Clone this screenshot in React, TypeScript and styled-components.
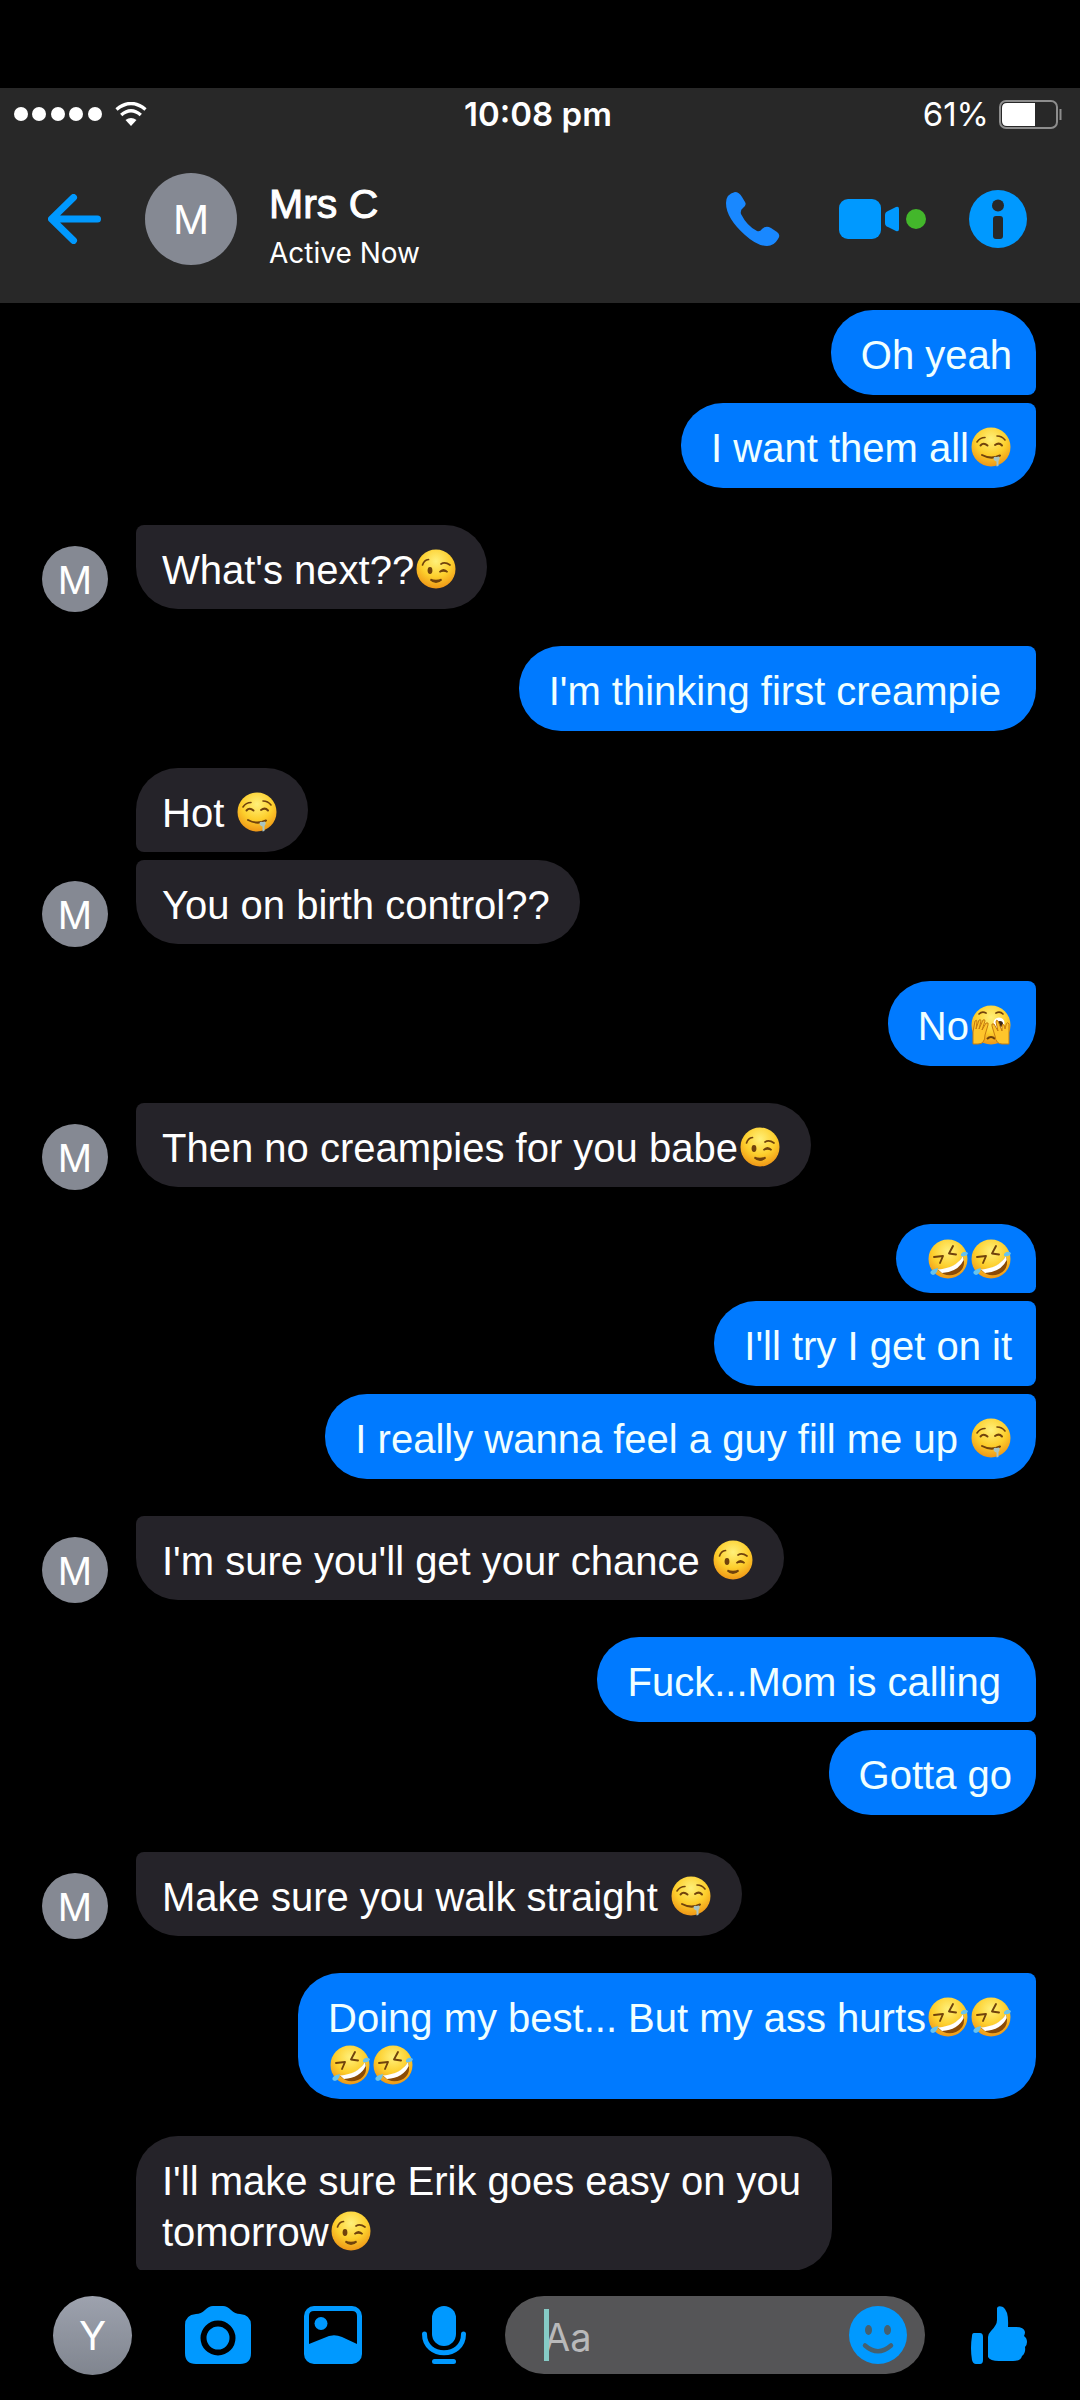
import React from 'react';
import styled, { createGlobalStyle, css } from 'styled-components';

const blue = '#0099ff';

const GlobalStyle = createGlobalStyle`
  * { box-sizing: border-box; }
  body { margin: 0; background: #000; }
  button { border: 0; padding: 0; background: none; cursor: pointer; }
  svg { display: block; flex: none; }
`;

const Page = styled.div`
  height: 100vh;
  display: flex;
  flex-direction: column;
  padding-top: 88px;
  background: #000;
  color: #fff;
  font-family: Inter, 'Liberation Sans', sans-serif;
`;

const Top = styled.header`
  flex: none;
  background: #282828;
`;

const StatusBar = styled.div`
  display: grid;
  grid-template-columns: 1fr auto 1fr;
  align-items: center;
  height: 52px;
  padding: 0 18px 0 14px;
  font-size: 33px;
  line-height: 40px;
`;

const Signal = styled.div`
  display: flex;
  align-items: center;
  gap: 13px;
`;

const Time = styled.time`
  font-weight: 600;
`;

const Power = styled.div`
  display: flex;
  align-items: center;
  justify-content: flex-end;
  gap: 10px;
`;

const ContactBar = styled.div`
  display: flex;
  align-items: center;
  height: 163px;
  padding: 0 53px 6px 48px;
`;

const Avatar = styled.div<{ $size: number; $font: number; $shaded?: boolean }>`
  flex: none;
  display: flex;
  align-items: center;
  justify-content: center;
  width: ${(p) => p.$size}px;
  height: ${(p) => p.$size}px;
  padding-top: 2px;
  border-radius: 50%;
  background: ${(p) => (p.$shaded ? 'linear-gradient(#9da2ae, #80858f)' : '#858993')};
  font-size: ${(p) => p.$font}px;
  line-height: 1;
`;

const Contact = styled.div`
  flex: 1;
  display: flex;
  align-items: center;
  gap: 32px;
  margin-left: 44px;
`;

const Name = styled.h1`
  margin: 12px 0 0;
  font-family: 'Liberation Sans', Arial, sans-serif;
  font-size: 41px;
  line-height: 50px;
  font-weight: 400;
  -webkit-text-stroke: 1px #fff;
`;

const Presence = styled.p`
  margin: 6px 0 0;
  font-size: 28px;
  line-height: 36px;
`;

const Actions = styled.div`
  display: flex;
  align-items: center;
  gap: 43px;
`;

const IconButton = styled.button`
  flex: none;
  display: flex;
  align-items: center;
  color: ${blue};
`;

const CallButton = styled(IconButton)`
  color: #1988ff;
  margin-right: 16px;
`;

const Video = styled.span`
  display: flex;
  align-items: center;
  gap: 7px;
`;

const OnlineDot = styled.span`
  width: 20px;
  height: 20px;
  border-radius: 50%;
  background: #43b72b;
`;

const Thread = styled.main`
  flex: 1;
  min-height: 0;
  overflow: hidden;
  display: flex;
  flex-direction: column;
  gap: 37px;
  padding: 7px 44px 0 42px;
`;

const Group = styled.section<{ $mine: boolean }>`
  flex: none;
  display: flex;
  align-items: flex-end;
  justify-content: ${(p) => (p.$mine ? 'flex-end' : 'flex-start')};
  gap: 28px;
`;

const AvatarSlot = styled.div`
  flex: none;
  width: 66px;
  margin-bottom: -3px;
`;

const Stack = styled.div<{ $mine: boolean }>`
  display: flex;
  flex-direction: column;
  align-items: ${(p) => (p.$mine ? 'flex-end' : 'flex-start')};
  gap: 8px;
`;

type Corner = 'first' | 'middle' | 'last';

const Bubble = styled.p<{ $mine: boolean; $corner: Corner }>`
  margin: 0;
  font-family: 'Liberation Sans', Arial, sans-serif;
  font-size: 40px;
  line-height: 51px;
  ${(p) => {
    const near = p.$corner === 'first' ? 42 : 8;
    const below = p.$corner === 'last' ? 42 : 8;
    return p.$mine
      ? css`
          padding: 20px 24px 14px 30px;
          background: #007aff;
          color: #f0ffff;
          border-radius: 42px ${near}px ${below}px 42px;
        `
      : css`
          max-width: 696px;
          padding: 20px 30px 13px 26px;
          background: #252329;
          border-radius: ${near}px 42px 42px ${below}px;
        `;
  }}
`;

const EmojiLine = styled.span<{ $alone: boolean }>`
  display: flex;
  height: ${(p) => (p.$alone ? 35 : 41)}px;
  align-items: center;
  ${(p) => p.$alone && 'margin: -3px 0 3px;'}
`;

const EmojiBox = styled.span`
  display: inline-block;
  width: 43px;
  height: 40px;
  padding: 0 1px 0 2px;
  vertical-align: -5px;
`;

const Composer = styled.form`
  flex: none;
  display: flex;
  align-items: center;
  height: 130px;
  padding: 0 53px;
`;

const Tools = styled.div`
  display: flex;
  align-items: center;
  margin: 0 39px 0 53px;
  gap: 53px;
`;

const MicButton = styled(IconButton)`
  margin-left: 7px;
`;

const Field = styled.label`
  position: relative;
  flex: 1;
  min-width: 0;
  display: flex;
  align-items: center;
  height: 78px;
  margin-right: 46px;
  padding: 0 18px 0 39px;
  border-radius: 39px;
  background: #555557;
`;

const Input = styled.input`
  flex: 1;
  min-width: 0;
  height: 52px;
  padding: 4px 0 0;
  border: 0;
  outline: 0;
  background: none;
  color: #fff;
  font: 38px/48px Inter, 'Liberation Sans', sans-serif;
  &::placeholder { color: #b9b9ba; opacity: 1; }
`;

const Caret = styled.span`
  position: absolute;
  left: 39px;
  top: 13px;
  width: 5px;
  height: 52px;
  background: #86cbc6;
`;

const ink = '#70420c';

const faces: Record<string, { label: string; art: React.ReactNode }> = {
  '🤤': {
    label: 'drooling face',
    art: (
      <>
        <g fill="none" stroke={ink} strokeWidth="1.6" strokeLinecap="round">
          <path d="M6 15q3-4.500 8-4.500" />
          <path d="M26 9q5 0 8 4" />
          <path d="M9.500 18.500q3-3.500 7 0" strokeWidth="2" />
          <path d="M24 18q4-3 7 .5" strokeWidth="2" />
          <path d="M11 28q9 5 18 .5" strokeWidth="2" />
        </g>
        <path d="M22.500 31q1-2 3-1l2.500-.500q1.500 2-.5 4.500v5l-2 .5v-5q-3-1-3-3.500z" fill="#a9c5c4" />
      </>
    ),
  },
  '😉': {
    label: 'winking face',
    art: (
      <>
        <g fill="none" stroke={ink} strokeWidth="1.700" strokeLinecap="round">
          <path d="M6.500 16q1.500-5 6-5.500" />
          <path d="M25 15q4-2.500 9 1" />
          <path d="M23.500 23q4-4.500 8 0q-4-2-8 0z" fill={ink} />
          <path d="M14.500 30.500q5.500 5 11 0q-5.500 2-11 0z" fill={ink} />
        </g>
        <ellipse cx="14" cy="21.500" rx="2.400" ry="3.400" fill={ink} />
      </>
    ),
  },
  '🫣': {
    label: 'face with peeking eye',
    art: (
      <>
        <path d="M8 9q3-3 7-1M25 8q4-2 7 1" fill="none" stroke={ink} strokeWidth="1.700" strokeLinecap="round" />
        <circle cx="28" cy="18" r="5.500" fill="#fff" />
        <circle cx="29" cy="19" r="3" fill="#3d2510" />
        <path d="M16 34q4-4 8 0" fill="none" stroke={ink} strokeWidth="2" />
        <g fill="#ffc52b" stroke="#c57b10" strokeWidth="1">
          <path d="M2 39V27l2-11q2-2 2 1l-1 7 3-9q2-1 2 1l-2 8 4-9q2-1 2 1l-3 9 4-7q3-1 2 2l-3 10q0 9-7 9z" />
          <path d="M38 39V27l0-8q-2-3-3 1l-1 4-1-4q-2-2-2 1l0 5-4-10q-2-2-2 1l2 9-4-7q-3-1-2 2l3 10q1 8 7 8z" />
        </g>
      </>
    ),
  },
  '🤣': {
    label: 'rolling on the floor laughing',
    art: (
      <>
        <g fill="none" stroke={ink} strokeWidth="1.900" strokeLinecap="round" strokeLinejoin="round">
          <path d="M6 18l9-1-3 7" />
          <path d="M25 7l-4 7.500 7 1" />
        </g>
        <path d="M10 31Q28 30 35 17q4 13-7 18-10 4-18-4z" fill="#8a4b08" />
        <path d="M10 30.500Q28 29 35 17l.7 4Q30 33 14 34z" fill="#fff" />
        <path d="M33 15q3-4 7-1q-1 4-7 3zM10 29q-1 6-5 7-4-1-2-4 2-2 7-3z" fill="#68c3ed" />
      </>
    ),
  },
};

const Emoji = ({ char }: { char: string }) => (
  <EmojiBox>
    <svg width="40" height="40" viewBox="0 0 40 40" role="img" aria-label={faces[char].label}>
      <defs>
        <radialGradient id="face" cx="50%" cy="30%" r="72%">
          <stop offset="0" stopColor="#fff07a" />
          <stop offset=".55" stopColor="#fdcf2d" />
          <stop offset="1" stopColor="#ee9315" />
        </radialGradient>
      </defs>
      <circle cx="20" cy="20" r="19.500" fill="url(#face)" />
      {faces[char].art}
    </svg>
  </EmojiBox>
);

const withEmoji = (text: string) =>
  text.split(/(🤤|😉|🫣|🤣)/u).filter(Boolean).map((part, i) => (faces[part] ? <Emoji key={i} char={part} /> : part));

type Message = { text: string; emojiLine?: string };
type MessageGroup = { mine: boolean; open?: boolean; messages: Message[] };

const conversation: MessageGroup[] = [
  { mine: true, messages: [{ text: 'Oh yeah' }, { text: 'I want them all🤤' }] },
  { mine: false, messages: [{ text: "What's next??😉" }] },
  { mine: true, messages: [{ text: "I'm thinking first creampie\u00a0" }] },
  { mine: false, messages: [{ text: 'Hot 🤤' }, { text: 'You on birth control??' }] },
  { mine: true, messages: [{ text: 'No🫣' }] },
  { mine: false, messages: [{ text: 'Then no creampies for you babe😉' }] },
  {
    mine: true,
    messages: [
      { text: '', emojiLine: '🤣🤣' },
      { text: "I'll try I get on it" },
      { text: 'I really wanna feel a guy fill me up 🤤' },
    ],
  },
  { mine: false, messages: [{ text: "I'm sure you'll get your chance 😉" }] },
  { mine: true, messages: [{ text: 'Fuck...Mom is calling\u00a0' }, { text: 'Gotta go' }] },
  { mine: false, messages: [{ text: 'Make sure you walk straight 🤤' }] },
  { mine: true, messages: [{ text: 'Doing my best... But my ass hurts🤣🤣', emojiLine: '🤣🤣' }] },
  { mine: false, open: true, messages: [{ text: "I'll make sure Erik goes easy on you tomorrow😉" }] },
];

const cornerOf = (group: MessageGroup, i: number): Corner => {
  if (group.open) return 'first';
  if (i === group.messages.length - 1) return 'last';
  return i === 0 ? 'first' : 'middle';
};

const MessageBlock = ({ group }: { group: MessageGroup }) => (
  <Group $mine={group.mine}>
    {!group.mine && (
      <AvatarSlot>
        {!group.open && <Avatar $size={66} $font={38}>M</Avatar>}
      </AvatarSlot>
    )}
    <Stack $mine={group.mine}>
      {group.messages.map((m, i) => (
        <Bubble key={i} $mine={group.mine} $corner={cornerOf(group, i)}>
          {withEmoji(m.text)}
          {m.emojiLine && <EmojiLine $alone={!m.text}>{withEmoji(m.emojiLine)}</EmojiLine>}
        </Bubble>
      ))}
    </Stack>
  </Group>
);

export default function App() {
  return (
    <Page>
      <GlobalStyle />
      <Top>
        <StatusBar>
          <Signal>
            <svg width="88" height="14" viewBox="0 0 88 14" fill="#fff" aria-hidden="true">
              {[7, 25, 44, 62, 81].map((x) => <circle key={x} cx={x} cy="7" r="7" />)}
            </svg>
            <svg width="32" height="24" viewBox="0 0 32 24" aria-hidden="true">
              <g fill="none" stroke="#fff" strokeWidth="3.400">
                <path d="M1.500 7.500Q16-4.500 30.500 7.500" />
                <path d="M6.200 13Q16 4.500 25.800 13" />
              </g>
              <path d="M10.500 18Q16 14 21.500 18L16 24z" fill="#fff" />
            </svg>
          </Signal>
          <Time>10:08 pm</Time>
          <Power>
            61%
            <svg width="63" height="29" viewBox="0 0 63 29" aria-hidden="true">
              <rect x="1" y="1" width="57" height="27" rx="6" fill="none" stroke="#8d8d8d" strokeWidth="2" />
              <path d="M36 3v23H8q-5 0-5-5V8q0-5 5-5z" fill="#fff" />
              <path d="M61.500 9v11" stroke="#8d8d8d" strokeWidth="2" />
            </svg>
          </Power>
        </StatusBar>
        <ContactBar>
          <IconButton type="button" aria-label="Back">
            <svg width="53" height="50" viewBox="0 0 53 50" fill="none" stroke="currentColor" strokeWidth="7" strokeLinecap="round" strokeLinejoin="round">
              <path d="M25.500 3.500L3.500 25L25.500 46.500M4 25H49.500" />
            </svg>
          </IconButton>
          <Contact>
            <Avatar $size={92} $font={40}>M</Avatar>
            <div>
              <Name>Mrs C</Name>
              <Presence>Active Now</Presence>
            </div>
          </Contact>
          <Actions>
            <CallButton type="button" aria-label="Call">
              <svg width="54" height="54" viewBox="0 0 54 54" fill="currentColor">
                <path d="M9 0Q13 0 16 5L19 10Q21 13 17 16Q14 18 15 22Q21 34 31 39Q34 40 36 37Q40 33 45 36L51 40Q55 43 52 47Q48 54 41 54Q31 54 19 43Q0 26 0 11Q0 2 9 0z" />
              </svg>
            </CallButton>
            <IconButton type="button" aria-label="Video call">
              <Video>
                <svg width="60" height="40" viewBox="0 0 60 40" fill="currentColor">
                  <rect width="42" height="40" rx="9" />
                  <path d="M46 16q0-3 3-4l8-4q3-1 3 2v20q0 3-3 2l-8-4q-3-1-3-4z" />
                </svg>
                <OnlineDot />
              </Video>
            </IconButton>
            <IconButton type="button" aria-label="Conversation details">
              <svg width="58" height="58" viewBox="0 0 58 58">
                <circle cx="29" cy="29" r="29" fill="currentColor" />
                <circle cx="29" cy="15.500" r="6" fill="#282828" />
                <rect x="24" y="26" width="10" height="23" rx="3" fill="#282828" />
              </svg>
            </IconButton>
          </Actions>
        </ContactBar>
      </Top>
      <Thread>
        {conversation.map((group, i) => <MessageBlock key={i} group={group} />)}
      </Thread>
      <Composer onSubmit={(e) => e.preventDefault()}>
        <Avatar $size={79} $font={40} $shaded>Y</Avatar>
        <Tools>
          <IconButton type="button" aria-label="Camera">
            <svg width="66" height="58" viewBox="0 0 66 58" fill="currentColor">
              <path d="M11 8Q16 8 20 4Q24 0 28 0H38Q42 0 46 4Q50 8 55 8Q66 9 66 19V47Q66 58 55 58H11Q0 58 0 47V19Q0 9 11 8z" />
              <circle cx="33" cy="32" r="14.500" fill={blue} stroke="#000" strokeWidth="6" />
            </svg>
          </IconButton>
          <IconButton type="button" aria-label="Photos">
            <svg width="58" height="58" viewBox="0 0 58 58" fill="currentColor">
              <rect width="58" height="58" rx="10" />
              <path d="M10 5H48Q53 5 53 10V38L38 31Q29 27 20 32L5 38V10Q5 5 10 5z" fill="#000" />
              <circle cx="17" cy="17.500" r="6.500" />
            </svg>
          </IconButton>
          <MicButton type="button" aria-label="Voice message">
            <svg width="44" height="58" viewBox="0 0 44 58" fill="currentColor">
              <rect x="10" width="24" height="40" rx="12" />
              <path d="M2.500 28C2.500 53 41.500 53 41.500 28" fill="none" stroke="currentColor" strokeWidth="5" strokeLinecap="round" />
              <rect x="10" y="53" width="24" height="5" rx="2.500" />
            </svg>
          </MicButton>
        </Tools>
        <Field>
          <Input type="text" placeholder="Aa" aria-label="Message" />
          <Caret />
          <IconButton type="button" aria-label="Emoji">
            <svg width="58" height="58" viewBox="0 0 58 58">
              <circle cx="29" cy="29" r="29" fill="currentColor" />
              <ellipse cx="19.500" cy="24" rx="3.500" ry="5" fill="#46606f" />
              <ellipse cx="38.500" cy="24" rx="3.500" ry="5" fill="#46606f" />
              <path d="M16 39.500Q29 51 42 39.500" fill="none" stroke="#46606f" strokeWidth="4.500" strokeLinecap="round" />
            </svg>
          </IconButton>
        </Field>
        <IconButton type="button" aria-label="Send a like">
          <svg width="56" height="58" viewBox="0 0 56 58" fill="currentColor">
            <path d="M26 2Q27-1 32 1Q38 5 37 21H45Q53 21 54 26Q54 28 53 30Q56 32 56 36Q56 39 54 41Q55 47 51 50Q50 55 42 55H28Q19 55 17 51V31Q17 28 20 25Q26 19 26 14z" />
            <path d="M3 27H9Q12 27 12 31V54Q12 58 9 58H5Q2 58 1 54Q-1 42 1 30Q1 27 3 27z" />
          </svg>
        </IconButton>
      </Composer>
    </Page>
  );
}
